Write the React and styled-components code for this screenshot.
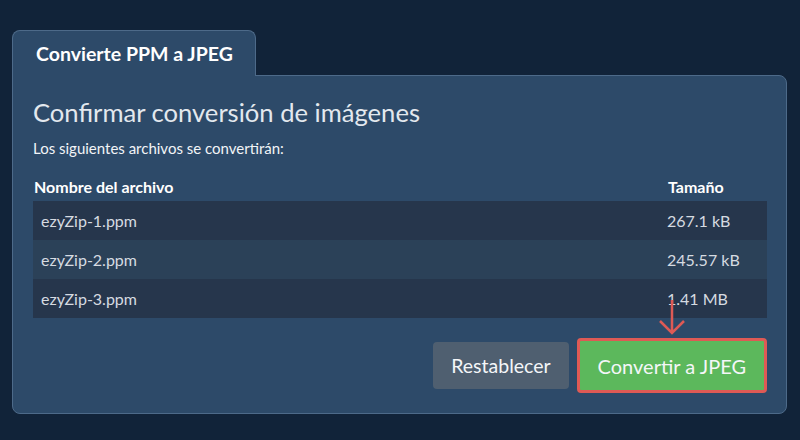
import styled, { createGlobalStyle } from "styled-components";

const Global = createGlobalStyle`
  html, body {
    margin: 0;
    height: 100%;
    background: #112339;
  }
  body {
    font-family: "Lato", "Open Sans", sans-serif;
  }
`;

const Page = styled.div`
  width: 800px;
  height: 440px;
  box-sizing: border-box;
  padding: 30px 13px 0 12px;
  display: flex;
  flex-direction: column;
`;

const Tab = styled.div`
  align-self: flex-start;
  width: 244px;
  height: 46px;
  box-sizing: border-box;
  padding-left: 23px;
  display: flex;
  align-items: center;
  background: #2d4a69;
  border: 1px solid #4d6a89;
  border-bottom: none;
  border-radius: 8px 8px 0 0;
  color: #ffffff;
  font-weight: 700;
  font-size: 19.5px;
  position: relative;
  z-index: 1;
  margin-bottom: -1px;
`;

const Panel = styled.div`
  background: #2d4a69;
  border: 1px solid #4d6a89;
  border-radius: 0 8px 8px 8px;
  padding: 20px 19px 20px 20px;
  height: 339px;
  box-sizing: border-box;
  display: flex;
  flex-direction: column;
`;

const Title = styled.h2`
  margin: 0;
  font-size: 25.6px;
  font-weight: 400;
  color: #e3e8ee;
  line-height: 32px;
`;

const Subtitle = styled.p`
  margin: 10px 0 0;
  font-size: 15px;
  color: #f2f4f7;
  line-height: 20px;
`;

const Table = styled.div`
  margin-top: 19px;
  display: grid;
  grid-template-columns: 1fr 100px;
`;

const Head = styled.div`
  font-size: 16px;
  font-weight: 700;
  color: #ffffff;
  padding: 0 0 4px ${({ $pad }) => $pad}px;
  line-height: 20px;
`;

const Cell = styled.div`
  height: 39px;
  display: flex;
  align-items: center;
  padding-left: ${({ $pad }) => $pad}px;
  background: ${({ $alt }) => ($alt ? "#2b4158" : "#26364c")};
  color: #d6dbe1;
  font-size: 16px;
`;

const Actions = styled.div`
  margin-top: auto;
  display: flex;
  justify-content: flex-end;
  align-items: center;
  gap: 8px;
`;

const Button = styled.button`
  font-family: inherit;
  font-size: ${({ $primary }) => ($primary ? 20 : 19.5)}px;
  border-radius: 4px;
  cursor: pointer;
  color: #f4f6f8;
  background: ${({ $primary }) => ($primary ? "#5cb85c" : "#4f5f70")};
  border: ${({ $primary }) => ($primary ? "3px solid #de5a55" : "none")};
  height: ${({ $primary }) => ($primary ? 55 : 47)}px;
  padding: 0 18px;
`;

const Pointed = styled.div`
  position: relative;
  display: flex;
`;

const Arrow = styled.svg`
  position: absolute;
  left: 50%;
  top: -38px;
  margin-left: -14px;
`;

const files = [
  ["ezyZip-1.ppm", "267.1 kB"],
  ["ezyZip-2.ppm", "245.57 kB"],
  ["ezyZip-3.ppm", "1.41 MB"],
];

export default function App() {
  return (
    <>
      <Global />
      <Page>
        <Tab>Convierte PPM a JPEG</Tab>
        <Panel>
          <Title>Confirmar conversión de imágenes</Title>
          <Subtitle>Los siguientes archivos se convertirán:</Subtitle>
          <Table>
            <Head $pad={1}>Nombre del archivo</Head>
            <Head $pad={1}>Tamaño</Head>
            {files.map(([name, size], i) => [
              <Cell key={name} $alt={i === 1} $pad={8}>
                {name}
              </Cell>,
              <Cell key={size} $alt={i === 1} $pad={0}>
                {size}
              </Cell>,
            ])}
          </Table>
          <Actions>
            <Button>Restablecer</Button>
            <Pointed>
              <Button $primary>Convertir a JPEG</Button>
              <Arrow width="28" height="36" viewBox="0 0 28 36">
                <path
                  d="M14 0 V33 M2 21 L14 33 L26 21"
                  stroke="#de5a55"
                  strokeWidth="2.5"
                  fill="none"
                />
              </Arrow>
            </Pointed>
          </Actions>
        </Panel>
      </Page>
    </>
  );
}
